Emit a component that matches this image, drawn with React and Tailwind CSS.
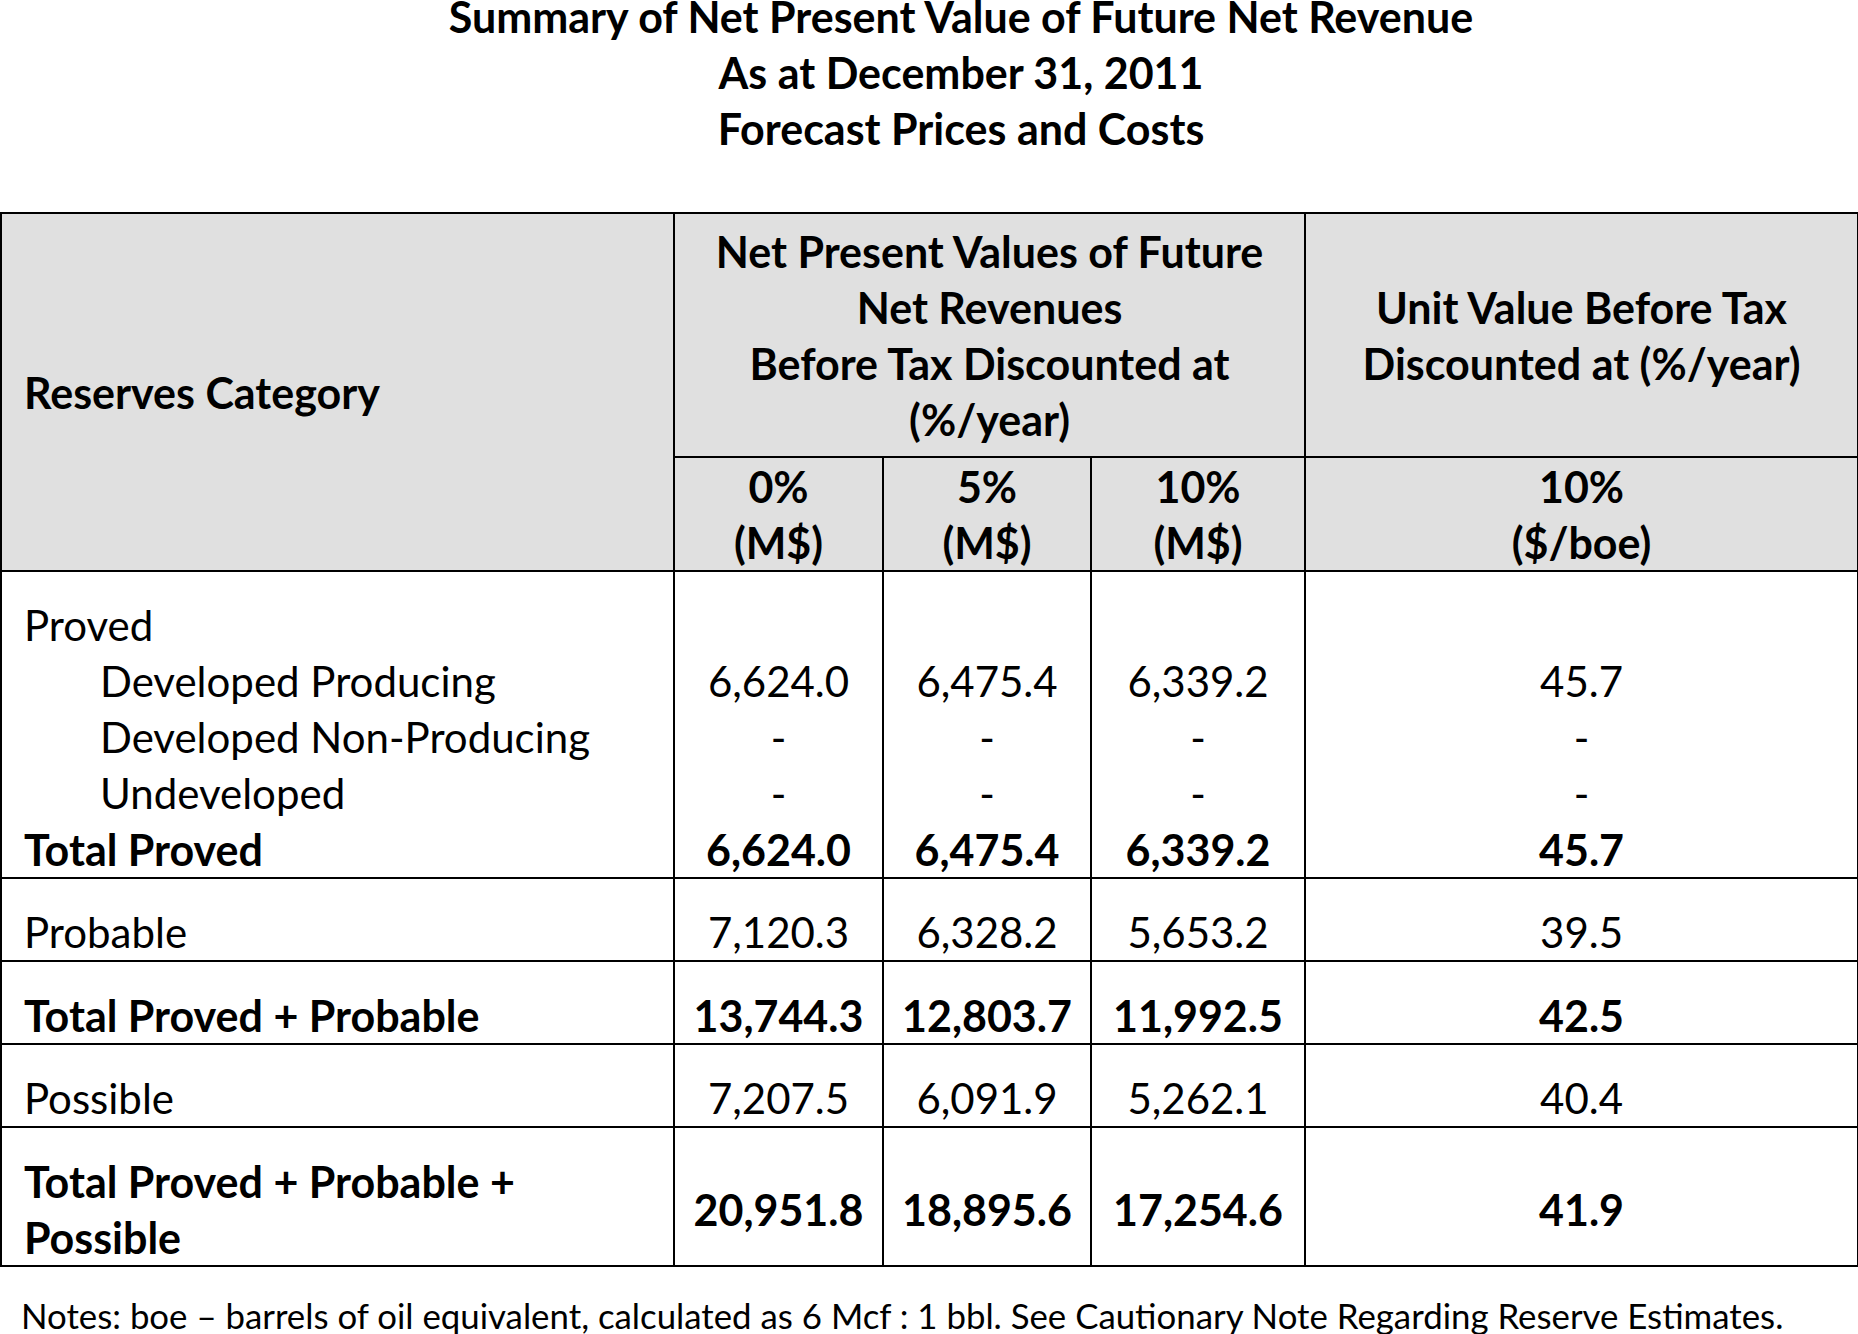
import React from "react";

// Body rows of the reserves table
const provedBlock = {
  labels: [
    { text: "Proved" },
    { text: "Developed Producing", indent: true },
    { text: "Developed Non-Producing", indent: true },
    { text: "Undeveloped", indent: true },
    { text: "Total Proved", bold: true },
  ],
  values: [
    ["", "6,624.0", "-", "-", "6,624.0"],
    ["", "6,475.4", "-", "-", "6,475.4"],
    ["", "6,339.2", "-", "-", "6,339.2"],
    ["", "45.7", "-", "-", "45.7"],
  ],
};

const simpleRows = [
  { label: "Probable", values: ["7,120.3", "6,328.2", "5,653.2", "39.5"] },
  { label: "Total Proved + Probable", bold: true, values: ["13,744.3", "12,803.7", "11,992.5", "42.5"] },
  { label: "Possible", values: ["7,207.5", "6,091.9", "5,262.1", "40.4"] },
];

const cell = "border-2 border-black";
const head = `${cell} align-middle text-center font-bold text-[43px]`;
const body = `${cell} align-middle pt-[23px] pb-[2px]`;

// header line: glyphs sit slightly lower than a plain 56px line
const HeadLine = ({ children }) => <div className="h-[56px] leading-[57px] whitespace-nowrap">{children}</div>;

const Line = ({ children, bold, indent }) => (
  <div
    className={`h-[56px] leading-[61px] whitespace-nowrap ${bold ? "font-bold text-[43px]" : "text-[42px]"} ${
      indent ? "pl-[76px]" : ""
    }`}
  >
    {children}
  </div>
);

const App = () => {
  return (
    <div className="w-[1858px] min-h-[1334px] bg-white text-black font-[Lato,sans-serif] overflow-hidden">
      {/* Title */}
      <div className="pl-[64px] text-center font-bold text-[43px] leading-[56px] mt-[-11px]">
        <div>Summary of Net Present Value of Future Net Revenue</div>
        <div>As at December 31, 2011</div>
        <div>Forecast Prices and Costs</div>
      </div>

      <table className="mt-[55px] table-fixed border-collapse w-[1857px]">
        <colgroup>
          <col className="w-[673px]" />
          <col className="w-[209px]" />
          <col className="w-[208px]" />
          <col className="w-[214px]" />
          <col className="w-[553px]" />
        </colgroup>
        <thead className="bg-[#e0e0e0]">
          <tr className="h-[244px]">
            <th rowSpan={2} className={`${head} !text-left pl-[22px]`}>
              <HeadLine>Reserves Category</HeadLine>
            </th>
            <th colSpan={3} className={head}>
              <HeadLine>Net Present Values of Future</HeadLine>
              <HeadLine>Net Revenues</HeadLine>
              <HeadLine>Before Tax Discounted at</HeadLine>
              <HeadLine>(%/year)</HeadLine>
            </th>
            <th className={head}>
              <HeadLine>Unit Value Before Tax</HeadLine>
              <HeadLine>Discounted at (%/year)</HeadLine>
            </th>
          </tr>
          <tr className="h-[113px]">
            {[
              ["0%", "(M$)"],
              ["5%", "(M$)"],
              ["10%", "(M$)"],
              ["10%", "($/boe)"],
            ].map(([a, b], i) => (
              <th key={i} className={head}>
                <HeadLine>{a}</HeadLine>
                <HeadLine>{b}</HeadLine>
              </th>
            ))}
          </tr>
        </thead>
        <tbody>
          {/* Proved group */}
          <tr className="h-[306px]">
            <td className={`${body} pl-[22px]`}>
              {provedBlock.labels.map((l) => (
                <Line key={l.text} bold={l.bold} indent={l.indent}>
                  {l.text}
                </Line>
              ))}
            </td>
            {provedBlock.values.map((col, i) => (
              <td key={i} className={`${body} text-center`}>
                {col.map((v, j) => (
                  <Line key={j} bold={j === 4}>
                    {v}
                  </Line>
                ))}
              </td>
            ))}
          </tr>

          {simpleRows.map((r) => (
            <tr key={r.label} className="h-[83px]">
              <td className={`${body} pl-[22px]`}>
                <Line bold={r.bold}>{r.label}</Line>
              </td>
              {r.values.map((v, i) => (
                <td key={i} className={`${body} text-center`}>
                  <Line bold={r.bold}>{v}</Line>
                </td>
              ))}
            </tr>
          ))}

          {/* Grand total */}
          <tr className="h-[138px]">
            <td className={`${body} pl-[22px]`}>
              <Line bold>Total Proved + Probable +</Line>
              <Line bold>Possible</Line>
            </td>
            {["20,951.8", "18,895.6", "17,254.6", "41.9"].map((v, i) => (
              <td key={i} className={`${body} text-center`}>
                <Line bold>{v}</Line>
              </td>
            ))}
          </tr>
        </tbody>
      </table>

      <p className="mt-[31px] pl-[21px] text-[34.8px] leading-[36px] whitespace-nowrap">
        Notes: boe – barrels of oil equivalent, calculated as 6 Mcf : 1 bbl. See Cautionary Note Regarding Reserve Estimates.
      </p>
    </div>
  );
};

export default App;
